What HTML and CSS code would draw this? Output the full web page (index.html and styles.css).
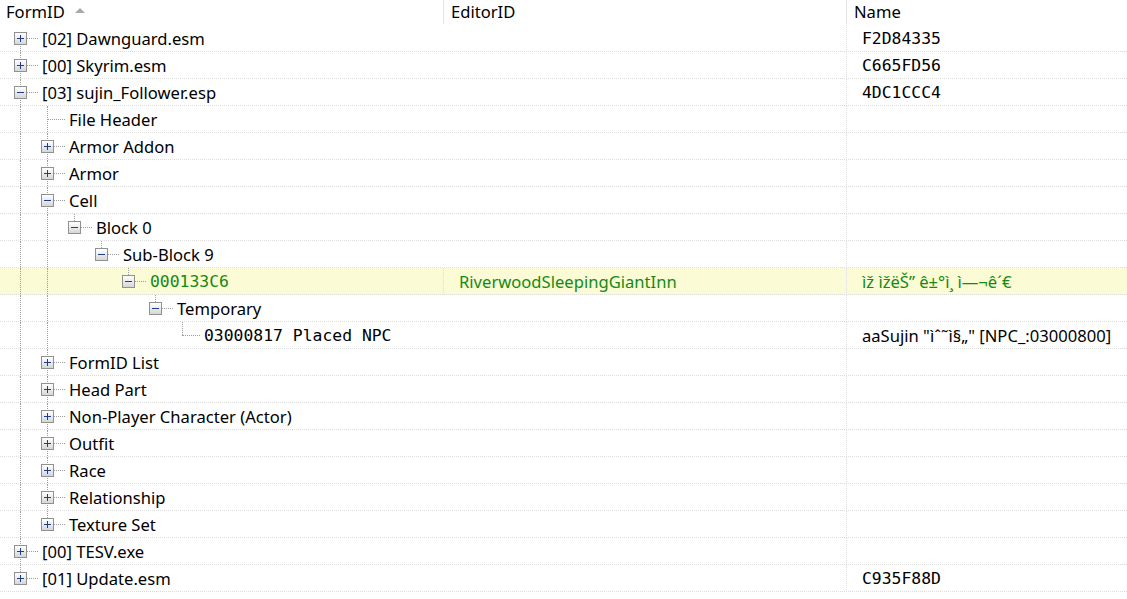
FILE: index.html
```html
<!DOCTYPE html>
<html>
  <head>
    <meta name="viewport" content="width=device-width, initial-scale=1.0" />
    <title>Records</title>
    <link rel="stylesheet" href="styles.css">
  </head>
  <body>
    <div class="header">
      <div class="hcell first">FormID <span class="sort"></span></div>
      <div class="hcell">EditorID</div>
      <div class="hcell">Name</div>
    </div>
    <div class="rows">
      <div class="row">
        <div class="tree"><span class="n first"><i class="box plus"></i></span><span class="label">[02] Dawnguard.esm</span></div>
        <div class="editor"></div>
        <div class="name mono">F2D84335</div>
      </div>
      <div class="row">
        <div class="tree"><span class="n tee"><i class="box plus"></i></span><span class="label">[00] Skyrim.esm</span></div>
        <div class="editor"></div>
        <div class="name mono">C665FD56</div>
      </div>
      <div class="row">
        <div class="tree"><span class="n tee"><i class="box minus"></i></span><span class="label">[03] sujin_Follower.esp</span></div>
        <div class="editor"></div>
        <div class="name mono">4DC1CCC4</div>
      </div>
      <div class="row">
        <div class="tree"><span class="g pipe"></span><span class="n tee"></span><span class="label">File Header</span></div>
        <div class="editor"></div>
        <div class="name"></div>
      </div>
      <div class="row">
        <div class="tree"><span class="g pipe"></span><span class="n tee"><i class="box plus"></i></span><span class="label">Armor Addon</span></div>
        <div class="editor"></div>
        <div class="name"></div>
      </div>
      <div class="row">
        <div class="tree"><span class="g pipe"></span><span class="n tee"><i class="box plus"></i></span><span class="label">Armor</span></div>
        <div class="editor"></div>
        <div class="name"></div>
      </div>
      <div class="row">
        <div class="tree"><span class="g pipe"></span><span class="n tee"><i class="box minus"></i></span><span class="label">Cell</span></div>
        <div class="editor"></div>
        <div class="name"></div>
      </div>
      <div class="row">
        <div class="tree"><span class="g pipe"></span><span class="g pipe"></span><span class="n last"><i class="box minus"></i></span><span class="label">Block 0</span></div>
        <div class="editor"></div>
        <div class="name"></div>
      </div>
      <div class="row">
        <div class="tree"><span class="g pipe"></span><span class="g pipe"></span><span class="g"></span><span class="n last"><i class="box minus"></i></span><span class="label">Sub-Block 9</span></div>
        <div class="editor"></div>
        <div class="name"></div>
      </div>
      <div class="row selected">
        <div class="tree"><span class="g pipe"></span><span class="g pipe"></span><span class="g"></span><span class="g"></span><span class="n last"><i class="box minus"></i></span><span class="label mono">000133C6</span></div>
        <div class="editor">RiverwoodSleepingGiantInn</div>
        <div class="name">ìž ìžëŠ” ê±°ì¸ ì—¬ê´€</div>
      </div>
      <div class="row">
        <div class="tree"><span class="g pipe"></span><span class="g pipe"></span><span class="g"></span><span class="g"></span><span class="g"></span><span class="n last"><i class="box minus"></i></span><span class="label">Temporary</span></div>
        <div class="editor"></div>
        <div class="name"></div>
      </div>
      <div class="row">
        <div class="tree"><span class="g pipe"></span><span class="g pipe"></span><span class="g"></span><span class="g"></span><span class="g"></span><span class="g"></span><span class="n last"></span><span class="label mono">03000817 Placed NPC</span></div>
        <div class="editor"></div>
        <div class="name">aaSujin "ìˆ˜ì§„" [NPC_:03000800]</div>
      </div>
      <div class="row">
        <div class="tree"><span class="g pipe"></span><span class="n tee"><i class="box plus"></i></span><span class="label">FormID List</span></div>
        <div class="editor"></div>
        <div class="name"></div>
      </div>
      <div class="row">
        <div class="tree"><span class="g pipe"></span><span class="n tee"><i class="box plus"></i></span><span class="label">Head Part</span></div>
        <div class="editor"></div>
        <div class="name"></div>
      </div>
      <div class="row">
        <div class="tree"><span class="g pipe"></span><span class="n tee"><i class="box plus"></i></span><span class="label">Non-Player Character (Actor)</span></div>
        <div class="editor"></div>
        <div class="name"></div>
      </div>
      <div class="row">
        <div class="tree"><span class="g pipe"></span><span class="n tee"><i class="box plus"></i></span><span class="label">Outfit</span></div>
        <div class="editor"></div>
        <div class="name"></div>
      </div>
      <div class="row">
        <div class="tree"><span class="g pipe"></span><span class="n tee"><i class="box plus"></i></span><span class="label">Race</span></div>
        <div class="editor"></div>
        <div class="name"></div>
      </div>
      <div class="row">
        <div class="tree"><span class="g pipe"></span><span class="n tee"><i class="box plus"></i></span><span class="label">Relationship</span></div>
        <div class="editor"></div>
        <div class="name"></div>
      </div>
      <div class="row">
        <div class="tree"><span class="g pipe"></span><span class="n last"><i class="box plus"></i></span><span class="label">Texture Set</span></div>
        <div class="editor"></div>
        <div class="name"></div>
      </div>
      <div class="row">
        <div class="tree"><span class="n tee"><i class="box plus"></i></span><span class="label">[00] TESV.exe</span></div>
        <div class="editor"></div>
        <div class="name"></div>
      </div>
      <div class="row">
        <div class="tree"><span class="n last"><i class="box plus"></i></span><span class="label">[01] Update.esm</span></div>
        <div class="editor"></div>
        <div class="name mono">C935F88D</div>
      </div>
    </div>
  </body>
</html>
```

FILE: styles.css
```css
body {
  margin: 0;
  font-family: "Noto Sans", sans-serif;
  font-size: 16.6px;
  color: #000;
  background: #fff;
}

.mono {
  font-family: "DejaVu Sans Mono", monospace;
  font-size: 16.4px;
}

/* column header */
.header {
  display: grid;
  grid-template-columns: 443px 403px 1fr;
  height: 25px;
}

.hcell {
  line-height: 23px;
  padding-left: 7px;
  border-left: 1px solid #e5e5e5;
  height: 24px;
}

.hcell.first {
  padding-left: 6px;
  border-left: none;
}

.sort {
  display: inline-block;
  margin-left: 6px;
  vertical-align: 5px;
  border-left: 5px solid transparent;
  border-right: 5px solid transparent;
  border-bottom: 5px solid #a8a8a8;
}

/* rows */
.row {
  display: grid;
  grid-template-columns: 443px 403px 1fr;
  height: 27px;
  box-sizing: border-box;
  border-bottom: 1px dotted #dcdcdc;
  line-height: 27px;
  white-space: nowrap;
}

.row.selected {
  background: #fbfbd5;
  color: #148a14;
}

.editor,
.name {
  padding-left: 15px;
  border-left: 1px dotted transparent;
  overflow: hidden;
}

.name {
  border-left-color: #dcdcdc;
}

.row.selected .editor {
  border-left-color: #dcdcdc;
}

/* tree lines */
.tree {
  display: flex;
  padding-left: 7px;
}

.g,
.n {
  position: relative;
  width: 27px;
  flex: none;
}

.g.pipe::before,
.n::before {
  content: "";
  position: absolute;
  left: 13px;
  border-left: 1px dotted #9c9c9c;
}

.g.pipe::before,
.n.tee::before {
  top: 0;
  bottom: -1px;
}

.n.first::before {
  top: 13px;
  bottom: -1px;
}

.n.last::before {
  top: 0;
  height: 13px;
}

.n::after {
  content: "";
  position: absolute;
  left: 13px;
  top: 13px;
  width: 18px;
  border-top: 1px dotted #9c9c9c;
}

.label {
  margin-left: 8px;
}

/* expander box */
.box {
  position: absolute;
  left: 7px;
  top: 7px;
  width: 11px;
  height: 11px;
  border: 1px solid #919191;
  background: linear-gradient(#ffffff, #d6d6d6);
  z-index: 1;
}

.box::before {
  content: "";
  position: absolute;
  left: 2px;
  top: 5px;
  width: 7px;
  height: 1px;
  background: #1f3d8f;
}

.box.plus::after {
  content: "";
  position: absolute;
  left: 5px;
  top: 2px;
  width: 1px;
  height: 7px;
  background: #1f3d8f;
}
```
